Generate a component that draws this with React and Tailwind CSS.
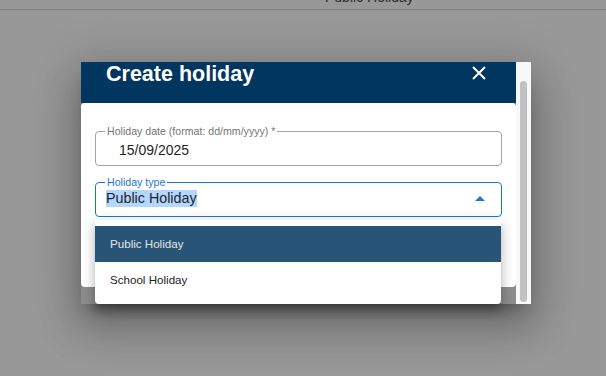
import React from 'react';

const Field = ({ label, active, children }) => (
  <div
    className={`relative h-[35px] rounded-[4px] border ${
      active ? 'border-[#1976d2]' : 'border-[#a3a3a3]'
    }`}
  >
    <span
      className={`absolute left-[9px] top-[-7px] bg-white px-[2px] text-[10.6px] leading-[12px] whitespace-nowrap ${
        active ? 'text-[#1976d2]' : 'text-[#757575]'
      }`}
    >
      {label}
    </span>
    {children}
  </div>
);

const App = () => {
  const options = ['Public Holiday', 'School Holiday'];

  return (
    <div className="relative w-[606px] h-[376px] overflow-hidden bg-[#989898] font-['Liberation_Sans',Arial,sans-serif]">
      {/* page behind the overlay */}
      <div className="h-[21px] border-b border-[#7f7f7f]">
        <div className="pl-[325px] -mt-[11px] text-[14px] leading-[16px] text-[#2c2c2c]">Public Holiday</div>
      </div>

      {/* dialog */}
      <div className="absolute left-[81px] top-[62px] flex h-[242px] w-[450px] shadow-[0_11px_15px_-7px_rgba(0,0,0,0.25),0_24px_38px_3px_rgba(0,0,0,0.18),0_9px_46px_8px_rgba(0,0,0,0.16)]">
        <div className="flex w-[435px] flex-col bg-[#8c8c8c]">
          <div className="flex h-[41px] items-start justify-between bg-[#00365f] pl-[25px] pr-[30px]">
            <h2 className="text-[21.5px] font-bold leading-[24px] text-white">Create holiday</h2>
            <svg width="14" height="14" viewBox="0 0 14 14" className="mt-[4px]">
              <path d="M1 1L13 13M13 1L1 13" stroke="white" strokeWidth="2" />
            </svg>
          </div>
          <div className="flex h-[184px] flex-col gap-[16px] rounded-[4px] bg-white px-[14px] pt-[28px]">
            <Field label="Holiday date (format: dd/mm/yyyy) *">
              <div className="pl-[23px] pt-[10px] text-[14px] leading-[16px] text-[#1f1f1f]">15/09/2025</div>
            </Field>
            <Field label="Holiday type" active>
              <div className="flex items-center justify-between pl-[10px] pr-[16px] pt-[7px]">
                <span className="bg-[#b3d7ff] text-[14.3px] leading-[17px] text-[#1f1f1f]">Public Holiday</span>
                <svg width="10" height="5" viewBox="0 0 10 5">
                  <path d="M0 5L5 0L10 5Z" fill="#1976d2" />
                </svg>
              </div>
            </Field>
          </div>
        </div>
        <div className="w-[15px] bg-[#f8f8f8] px-[4px] pt-[19px] pb-[2px]">
          <div className="h-full rounded-full bg-[#c1c1c1]" />
        </div>

        {/* open select menu */}
        <ul className="absolute left-[14px] top-[158px] w-[406px] rounded-b-[4px] bg-white py-[6px] shadow-[0_5px_5px_-3px_rgba(0,0,0,0.2),0_8px_10px_1px_rgba(0,0,0,0.14),0_3px_14px_2px_rgba(0,0,0,0.12)]">
          {options.map((o, i) => (
            <li
              key={o}
              className={`flex h-[36px] items-center px-[15px] text-[11.6px] ${
                i === 0 ? 'bg-[#285577] text-[#e4e4e4]' : 'text-[#222]'
              }`}
            >
              {o}
            </li>
          ))}
        </ul>
      </div>
    </div>
  );
};

export default App;
